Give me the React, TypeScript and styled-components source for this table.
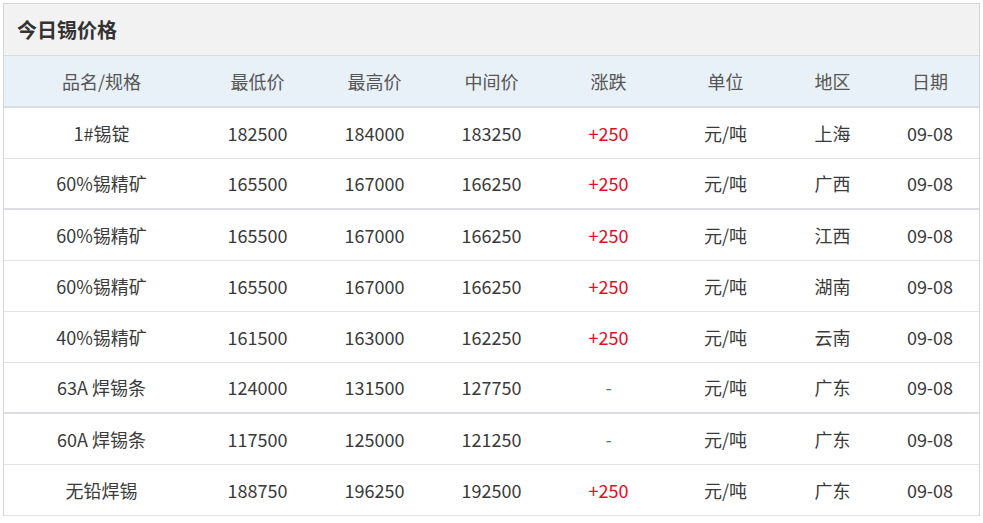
import styled, { createGlobalStyle } from 'styled-components';

const GlobalStyle = createGlobalStyle`
  body {
    margin: 0;
    padding: 3px;
    background: #fff;
    font-family: "Noto Sans CJK SC", "Noto Sans", sans-serif;
  }
`;

const Panel = styled.div`
  width: 975px;
  border: 1px solid #d4d4d4;
  border-bottom: none;
  background: #fff;
`;

const TitleBar = styled.div`
  height: 51px;
  display: flex;
  align-items: center;
  padding-left: 13px;
  background: #f2f2f2;
  border-bottom: 1px solid #dcdcdc;
  font-size: 20px;
  font-weight: bold;
  color: #333;
`;

const Table = styled.table`
  width: 100%;
  border-collapse: collapse;
  table-layout: fixed;
`;

const HeadRow = styled.tr`
  height: 51px;
  background: #e8f0f8;
  border-bottom: 2px solid #d9dee5;
`;

const Th = styled.th`
  font-weight: normal;
  font-size: 18px;
  color: #555;
  text-align: center;
  padding: 0;
`;

const Row = styled.tr<{ $thick?: boolean }>`
  height: 51px;
  border-bottom: ${(p) => (p.$thick ? '2px solid #dcdde3' : '1px solid #e2e2e2')};
`;

const Td = styled.td<{ $tone?: 'up' | 'flat' }>`
  font-size: 18px;
  text-align: center;
  padding: 0;
  color: ${(p) => (p.$tone === 'up' ? '#e60b1e' : p.$tone === 'flat' ? '#3d8a5c' : '#3a3a3a')};
`;

const cols = [195, 117, 117, 117, 117, 117, 97, 98];
const heads = ['品名/规格', '最低价', '最高价', '中间价', '涨跌', '单位', '地区', '日期'];

const rows = [
  ['1#锡锭', '182500', '184000', '183250', '+250', '上海'],
  ['60%锡精矿', '165500', '167000', '166250', '+250', '广西'],
  ['60%锡精矿', '165500', '167000', '166250', '+250', '江西'],
  ['60%锡精矿', '165500', '167000', '166250', '+250', '湖南'],
  ['40%锡精矿', '161500', '163000', '162250', '+250', '云南'],
  ['63A 焊锡条', '124000', '131500', '127750', '-', '广东'],
  ['60A 焊锡条', '117500', '125000', '121250', '-', '广东'],
  ['无铅焊锡', '188750', '196250', '192500', '+250', '广东'],
];

export default function App() {
  return (
    <>
      <GlobalStyle />
      <Panel>
        <TitleBar>今日锡价格</TitleBar>
        <Table>
          <colgroup>
            {cols.map((w, i) => (
              <col key={i} style={{ width: w }} />
            ))}
          </colgroup>
          <thead>
            <HeadRow>
              {heads.map((h) => (
                <Th key={h}>{h}</Th>
              ))}
            </HeadRow>
          </thead>
          <tbody>
            {rows.map((r, i) => (
              <Row key={i} $thick={i === 1 || i === 5}>
                <Td>{r[0]}</Td>
                <Td>{r[1]}</Td>
                <Td>{r[2]}</Td>
                <Td>{r[3]}</Td>
                <Td $tone={r[4] === '-' ? 'flat' : 'up'}>{r[4]}</Td>
                <Td>元/吨</Td>
                <Td>{r[5]}</Td>
                <Td>09-08</Td>
              </Row>
            ))}
          </tbody>
        </Table>
      </Panel>
    </>
  );
}
